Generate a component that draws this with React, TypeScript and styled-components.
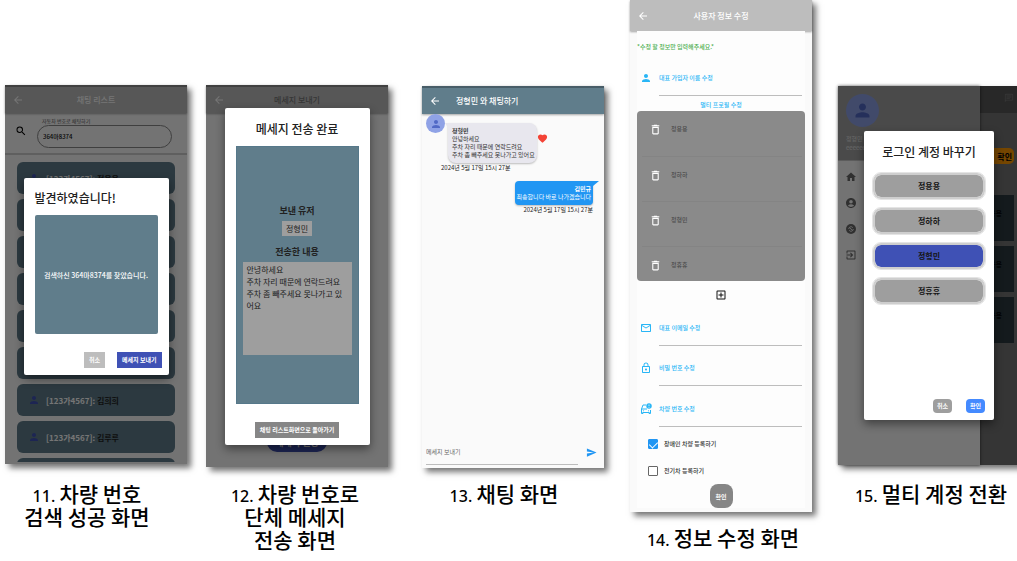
import React from "react";
import styled, { createGlobalStyle, css } from "styled-components";
import {
  MdAccountCircle,
  MdArrowBack,
  MdDeleteOutline,
  MdExitToApp,
  MdFavorite,
  MdHome,
  MdLockOutline,
  MdMailOutline,
  MdOutlineAddBox,
  MdOutlineChat,
  MdPerson,
  MdSearch,
  MdSend,
} from "react-icons/md";

const GlobalStyle = createGlobalStyle`
  * { box-sizing: border-box; }
  body {
    margin: 0;
    background: #fff;
    color: #212121;
    font-family: "Noto Sans CJK KR", "Noto Sans", sans-serif;
    overflow-x: hidden;
  }
  button, input, textarea { font-family: inherit; margin: 0; }
  h2, h3, p, figure, ul { margin: 0; padding: 0; }
  ul { list-style: none; }
  svg { display: block; flex: none; }
`;

/* ---------- page ---------- */

const Gallery = styled.main`
  display: grid;
  grid-template-columns:
    minmax(0, 192fr) minmax(0, 210fr) minmax(0, 222fr)
    minmax(0, 194fr) minmax(0, 199fr);
  align-items: start;
  padding-bottom: 8px;
  overflow: hidden;
`;

const Figure = styled.figure<{ $side: number; $bleed?: boolean }>`
  padding: 0 ${(p) => (p.$bleed ? 0 : p.$side)}px 0 ${(p) => p.$side}px;
  margin-right: ${(p) => (p.$bleed ? "-3px" : "0")};
`;

const Stage = styled.div<{ $top: number; $height: number }>`
  padding-top: ${(p) => p.$top}px;
  min-height: ${(p) => p.$height}px;
`;

const Phone = styled.section<{ $height: number; $bg?: string }>`
  position: relative;
  display: flex;
  flex-direction: column;
  height: ${(p) => p.$height}px;
  background: ${(p) => p.$bg || "#fafafa"};
  box-shadow: 4px 4px 6px rgba(0, 0, 0, 0.55);
`;

const Caption = styled.figcaption<{ $left?: number; $right?: number }>`
  padding: 0 ${(p) => p.$right || 0}px 0 ${(p) => p.$left || 0}px;
  margin-top: 14px;
  color: #000;
  font-size: 21px;
  font-weight: 500;
  line-height: 23px;
  text-align: center;
  white-space: nowrap;
`;

const CaptionNumber = styled.span`
  font-family: "Noto Sans", sans-serif;
  font-size: 16px;
  font-weight: 500;
  line-height: 1;
`;

/* ---------- shared phone parts ---------- */

const AppBar = styled.header<{ $bg?: string; $height?: number; $strip?: boolean }>`
  display: grid;
  grid-template-columns: 26px 1fr 26px;
  align-items: center;
  flex: none;
  height: ${(p) => p.$height || 28}px;
  border-top: ${(p) => (p.$strip ? "2px solid rgba(0,0,0,0.25)" : "none")};
  background: ${(p) => p.$bg || "#bdbdbd"};
  box-shadow: 0 1px 2px rgba(0, 0, 0, 0.35);
  color: #fff;
`;

const BarTitle = styled.h2<{ $color?: string; $left?: boolean }>`
  padding-left: ${(p) => (p.$left ? 8 : 0)}px;
  color: ${(p) => p.$color || "#fff"};
  font-size: 8px;
  font-weight: 500;
  line-height: 12px;
  text-align: ${(p) => (p.$left ? "left" : "center")};
`;

const IconButton = styled.button`
  display: flex;
  justify-content: center;
  align-items: center;
  padding: 0;
  border: 0;
  background: none;
  color: inherit;
`;

const Scrim = styled.div<{ $top?: number }>`
  position: absolute;
  inset: 0;
  z-index: 2;
  display: flex;
  align-items: center;
  justify-content: center;
  padding-top: ${(p) => p.$top || 0}px;
  background: rgba(0, 0, 0, 0.54);
`;

const Dialog = styled.div<{ $width: number; $height: number; $pad: string }>`
  display: flex;
  flex-direction: column;
  width: ${(p) => p.$width}px;
  min-height: ${(p) => p.$height}px;
  padding: ${(p) => p.$pad};
  border-radius: 2px;
  background: #fff;
  box-shadow: 0 4px 10px rgba(0, 0, 0, 0.45);
`;

const DialogTitle = styled.h2<{ $center?: boolean }>`
  font-size: 12px;
  font-weight: 500;
  line-height: 18px;
  text-align: ${(p) => (p.$center ? "center" : "left")};
  white-space: nowrap;
`;

const DialogActions = styled.div<{ $gap: number; $center?: boolean }>`
  display: flex;
  justify-content: ${(p) => (p.$center ? "center" : "flex-end")};
  gap: ${(p) => p.$gap}px;
  margin-top: auto;
`;

const SmallButton = styled.button<{ $bg: string; $pad?: number; $h?: number; $round?: number }>`
  height: ${(p) => p.$h || 16}px;
  padding: 0 ${(p) => p.$pad ?? 5}px;
  border: 0;
  border-radius: ${(p) => p.$round || 0}px;
  background: ${(p) => p.$bg};
  color: #fff;
  font-size: 6px;
  font-weight: 700;
  line-height: 8px;
  white-space: nowrap;
`;

/* ---------- 11: search result ---------- */

const SearchArea = styled.div`
  display: grid;
  grid-template-columns: 32px 1fr;
  align-items: center;
  flex: none;
  height: 42px;
  padding: 0 15px 4px 0;
  border-bottom: 2px solid #d0d0d0;
  color: #000;
`;

const SearchIcon = styled.span`
  display: flex;
  justify-content: center;
`;

const SearchBox = styled.div`
  position: relative;
  height: 23px;
`;

const SearchLabel = styled.label`
  position: absolute;
  top: -3px;
  left: 4px;
  padding: 0 1px;
  background: #fafafa;
  color: #555;
  font-size: 5px;
  line-height: 7px;
`;

const SearchInput = styled.input`
  width: 100%;
  height: 23px;
  padding: 0 5px;
  border: 1px solid #8a8a8a;
  border-radius: 12px;
  background: none;
  color: #111;
  font-size: 6px;
  font-weight: 500;
`;

const CarList = styled.ul`
  display: flex;
  flex: 1;
  flex-direction: column;
  gap: 5px;
  min-height: 0;
  margin: 7px 12px 2px;
  overflow: hidden;
`;

const CarCard = styled.li`
  display: flex;
  align-items: center;
  flex: none;
  gap: 6px;
  height: 32px;
  padding-left: 11px;
  border-radius: 6px;
  background: #607d8b;
  color: #222;
  font-size: 8px;
  font-weight: 700;
`;

const Plate = styled.span`
  color: #fff;
`;

const ResultPanel = styled.div`
  display: flex;
  align-items: center;
  justify-content: center;
  height: 119px;
  margin: 8px 4px 0 0;
  border-radius: 2px;
  background: #607d8b;
  color: #fff;
  font-size: 7px;
  font-weight: 500;
  white-space: nowrap;
`;

/* ---------- 12: message sent ---------- */

const SentPanel = styled.div`
  display: flex;
  flex-direction: column;
  align-items: center;
  height: 258px;
  margin-top: 8px;
  padding: 57px 6px 0;
  border: 1px solid #56788a;
  background: #607d8b;
`;

const SentHeading = styled.h3`
  font-size: 9px;
  font-weight: 700;
  line-height: 14px;
`;

const Recipient = styled.p`
  margin: 3px 0 9px;
  padding: 0 4px;
  background: #9e9e9e;
  font-size: 8px;
  line-height: 15px;
`;

const SentText = styled.p`
  align-self: stretch;
  height: 93px;
  margin-top: 3px;
  padding: 2px 4px;
  background: #9e9e9e;
  font-size: 8px;
  line-height: 12px;
`;

const SendPill = styled.button`
  align-self: center;
  width: 60px;
  height: 20px;
  margin: auto 0 15px;
  padding: 0;
  border: 0;
  border-radius: 10px;
  background: #3f51b5;
  color: #fff;
  font-size: 9px;
  font-weight: 700;
  white-space: nowrap;
`;

/* ---------- 13: chat ---------- */

const Messages = styled.div`
  display: flex;
  flex: 1;
  flex-direction: column;
  font-size: 6px;
  line-height: 8px;
`;

const Incoming = styled.div`
  display: flex;
  align-items: flex-start;
  padding-left: 4px;
`;

const Avatar = styled.span<{ $size: number }>`
  display: flex;
  align-items: center;
  justify-content: center;
  flex: none;
  width: ${(p) => p.$size}px;
  height: ${(p) => p.$size}px;
  border-radius: 50%;
  background: #8fa2e6;
  color: #5169c6;
`;

const Bubble = styled.div<{ $mine?: boolean }>`
  position: relative;
  background: ${(p) => (p.$mine ? "#2196f3" : "#e8e7ee")};
  box-shadow: 0 1px 2px rgba(0, 0, 0, 0.25);
  color: ${(p) => (p.$mine ? "#fff" : "#333")};
  white-space: nowrap;
  ${(p) =>
    p.$mine
      ? css`
          align-self: flex-end;
          margin: 9px 11px 0 0;
          padding: 4px 2px;
          border-radius: 4px 0 4px 4px;
          text-align: right;
        `
      : css`
          margin: 9px 0 0 3px;
          padding: 4px 2px 4px 4px;
          border-radius: 0 8px 8px 8px;
        `}
  &::before {
    content: "";
    position: absolute;
    top: 0;
    ${(p) => (p.$mine ? "right: -6px;" : "left: -3px;")}
    border-top: 5px solid ${(p) => (p.$mine ? "#2196f3" : "#e8e7ee")};
    ${(p) => (p.$mine ? "border-right: 6px solid transparent;" : "border-left: 3px solid transparent;")}
  }
`;

const Sender = styled.strong`
  display: block;
  font-weight: 700;
`;

const Like = styled.span`
  margin-top: 19px;
  color: #f44336;
`;

const Time = styled.time<{ $mine?: boolean }>`
  display: block;
  padding: ${(p) => (p.$mine ? "1px 11px 0 0" : "1px 0 0 19px")};
  text-align: ${(p) => (p.$mine ? "right" : "left")};
`;

const Composer = styled.form`
  display: grid;
  grid-template-columns: 1fr 24px;
  align-items: center;
  gap: 1px;
  padding: 0 1px 3px 4px;
`;

const ComposerInput = styled.input`
  min-width: 0;
  height: 26px;
  padding: 0;
  border: 0;
  border-bottom: 1px solid #bdbdbd;
  background: none;
  font-size: 6px;
  &::placeholder { color: #666; opacity: 1; }
`;

/* ---------- 14: edit profile ---------- */

const EditForm = styled.form`
  display: flex;
  flex-direction: column;
  margin: 0 7px;
  padding-top: 10px;
  background: #fdfdfd;
  color: #29b6f6;
  font-size: 6px;
  font-weight: 500;
`;

const Note = styled.p`
  color: #4caf50;
  line-height: 12px;
  white-space: nowrap;
`;

const Field = styled.div<{ $top: number }>`
  display: grid;
  grid-template-columns: 18px 1fr;
  column-gap: 4px;
  align-items: center;
  margin: ${(p) => p.$top}px 3px 0 0;
`;

const FieldIcon = styled.span`
  display: flex;
  justify-content: center;
`;

const FieldLabel = styled.label`
  line-height: 12px;
`;

const FieldInput = styled.input`
  grid-column: 2;
  min-width: 0;
  height: 12px;
  padding: 0;
  border: 0;
  border-bottom: 1px solid #bdbdbd;
  background: none;
  font-size: 6px;
`;

const ProfilesTitle = styled.h3`
  margin-top: 3px;
  font-size: 6px;
  font-weight: 500;
  line-height: 12px;
  text-align: center;
`;

const Profiles = styled.ul`
  border-radius: 4px;
  background: #8a8a8a;
  color: #4a4a4a;
  overflow: hidden;
`;

const Profile = styled.li`
  display: flex;
  align-items: flex-start;
  gap: 9px;
  height: 45px;
  margin: 0 3px 0 5px;
  padding: 12px 0 0 7px;
  line-height: 12px;
  & + & { border-top: 1px solid #848484; }
  &:last-child { height: 35px; }
  svg { color: #fff; }
`;

const AddButton = styled(IconButton)`
  align-self: center;
  margin-top: 8px;
  color: #111;
`;

const CheckRow = styled.label<{ $top: number }>`
  display: flex;
  align-items: center;
  gap: 6px;
  margin: ${(p) => p.$top}px 0 0 11px;
  color: #333;
  line-height: 10px;
`;

const CheckBox = styled.input`
  display: grid;
  place-items: center;
  width: 10px;
  height: 10px;
  border: 1px solid #666;
  border-radius: 1px;
  appearance: none;
  background: #fff;
  &:checked { border-color: #2196f3; background: #2196f3; }
  &:checked::after {
    content: "";
    width: 4px;
    height: 7px;
    margin-bottom: 2px;
    border: solid #fff;
    border-width: 0 1px 1px 0;
    transform: rotate(45deg);
  }
`;

const ConfirmButton = styled.button`
  align-self: center;
  width: 23px;
  height: 24px;
  margin-top: 8px;
  padding: 0;
  border: 0;
  border-radius: 8px;
  background: #868686;
  color: #fff;
  font-size: 6px;
  font-weight: 700;
`;

/* ---------- 15: account switch ---------- */

const HomeBar = styled.header`
  display: flex;
  justify-content: flex-end;
  height: 27px;
  padding: 7px 6px 0 0;
  background: #bdbdbd;
  color: #fff;
`;

const HomeBody = styled.div`
  display: flex;
  flex-direction: column;
  align-items: flex-end;
  gap: 5px;
  padding: 35px 6px 0 0;
`;

const OrangePill = styled.button`
  position: relative;
  z-index: 1;
  width: 46px;
  height: 16px;
  margin-bottom: 26px;
  padding: 0 2px;
  border: 0;
  border-radius: 5px;
  background: #ff9800;
  font-size: 8px;
  font-weight: 700;
  text-align: right;
`;

const HomeCard = styled.div`
  width: 80px;
  height: 46px;
  padding: 12px 12px 0 0;
  background: #607d8b;
  color: #111;
  font-size: 7px;
  font-weight: 700;
  line-height: 12px;
  text-align: right;
`;

const DrawerScrim = styled.div`
  position: absolute;
  inset: 0;
  background: rgba(0, 0, 0, 0.54);
`;

const Drawer = styled.aside`
  position: absolute;
  inset: 0 auto 0 0;
  z-index: 1;
  width: 142px;
  background: #fafafa;
  box-shadow: 0 0 3px rgba(0, 0, 0, 0.6);
`;

const DrawerHead = styled.div`
  height: 75px;
  padding: 8px;
  border-bottom: 1px solid #c8c8c8;
  background: #a2a2a2;
  color: #e0e0e0;
  font-size: 6px;
  line-height: 9px;
`;

const DrawerName = styled.p`
  padding-top: 7px;
`;

const DrawerNav = styled.nav`
  display: flex;
  flex-direction: column;
  gap: 14px;
  padding: 10px 7px;
`;

const NavLink = styled.a`
  color: #6a6a6a;
`;

const Accounts = styled.div`
  display: flex;
  flex-direction: column;
  gap: 9px;
  margin-top: 12px;
`;

const Account = styled.button<{ $active?: boolean }>`
  height: 26px;
  padding: 0;
  border: 2px solid #cecece;
  border-radius: 8px;
  outline: 1px solid #e4e4e4;
  background: ${(p) => (p.$active ? "#3f51b5" : "#9e9e9e")};
  background-clip: padding-box;
  color: #161616;
  font-size: 8px;
  font-weight: 700;
  line-height: 12px;
`;

const CarBadgeIcon = () => (
  <svg width="12" height="12" viewBox="0 0 24 24" fill="none" stroke="currentColor" strokeWidth="2">
    <path d="M12 4H6L3 12v9h3v-2h12v2h3v-7M3.500 12H14M5 19h14" />
    <circle cx="7" cy="15.500" r="1.200" fill="currentColor" stroke="none" />
    <circle cx="17" cy="15.500" r="1.200" fill="currentColor" stroke="none" />
    <circle cx="18" cy="6" r="5.500" fill="currentColor" stroke="none" />
    <path d="M18 3v3.500M18 8v1.500" stroke="#fdfdfd" strokeWidth="1.500" />
  </svg>
);

const SwitchIcon = () => (
  <svg width="12" height="12" viewBox="0 0 24 24" fill="none">
    <circle cx="12" cy="12" r="10" fill="currentColor" />
    <path
      d="M7.500 12a4.500 4.500 0 0 1 8-2.800M16.500 12a4.500 4.500 0 0 1-8 2.800M10 10.500l4 3"
      stroke="#fafafa"
      strokeWidth="1.800"
    />
  </svg>
);

const cars: [string, string][] = [
  ["[123가4567]:", "정용용"],
  ["[123가4567]:", "정하하"],
  ["[123가4567]:", "정형민"],
  ["[123가4567]:", "정휴휴"],
  ["[123가4567]:", "김민규"],
  ["[123가4567]:", "김하하"],
  ["[123가4567]:", "김희희"],
  ["[123가4567]:", "김루루"],
];

const accounts = ["정용용", "정하하", "정형민", "정휴휴"];

const Back = () => (
  <IconButton type="button" aria-label="뒤로">
    <MdArrowBack size={12} />
  </IconButton>
);

function SearchScreen() {
  return (
    <Phone $height={379}>
      <AppBar $strip>
        <Back />
        <BarTitle>채팅 리스트</BarTitle>
      </AppBar>
      <SearchArea>
        <SearchIcon>
          <MdSearch size={12} />
        </SearchIcon>
        <SearchBox>
          <SearchInput id="plate" defaultValue="364마8374" />
          <SearchLabel htmlFor="plate">자동차 번호로 채팅하기</SearchLabel>
        </SearchBox>
      </SearchArea>
      <CarList>
        {cars.map(([plate, name], i) => (
          <CarCard key={i}>
            <MdPerson size={12} color="#3f51b5" />
            <span>
              <Plate>{plate}</Plate> {name}
            </span>
          </CarCard>
        ))}
        <CarCard />
      </CarList>
      <Scrim $top={4}>
        <Dialog $width={145} $height={197} $pad="11px 7px 7px 11px" role="dialog">
          <DialogTitle>발견하였습니다!</DialogTitle>
          <ResultPanel>검색하신 364마8374를 찾았습니다.</ResultPanel>
          <DialogActions $gap={12}>
            <SmallButton type="button" $bg="#bdbdbd">취소</SmallButton>
            <SmallButton type="button" $bg="#3f51b5">메세지 보내기</SmallButton>
          </DialogActions>
        </Dialog>
      </Scrim>
    </Phone>
  );
}

function SentScreen() {
  return (
    <Phone $height={382}>
      <AppBar $strip>
        <Back />
        <BarTitle $color="#777">메세지 보내기</BarTitle>
      </AppBar>
      <SendPill type="button">메세지 전송</SendPill>
      <Scrim>
        <Dialog $width={145} $height={337} $pad="12px 11px 7px" role="dialog">
          <DialogTitle $center>메세지 전송 완료</DialogTitle>
          <SentPanel>
            <SentHeading>보낸 유저</SentHeading>
            <Recipient>정형민</Recipient>
            <SentHeading>전송한 내용</SentHeading>
            <SentText>
              안녕하세요
              <br />
              주차 자리 때문에 연락드려요
              <br />
              주차 좀 빼주세요 못나가고 있어요
            </SentText>
          </SentPanel>
          <DialogActions $gap={0} $center>
            <SmallButton type="button" $bg="#868686">채팅 리스트화면으로 돌아가기</SmallButton>
          </DialogActions>
        </Dialog>
      </Scrim>
    </Phone>
  );
}

function ChatScreen() {
  return (
    <Phone $height={382}>
      <AppBar $strip $bg="#607d8b">
        <Back />
        <BarTitle $left>정형민 와 채팅하기</BarTitle>
      </AppBar>
      <Messages>
        <Incoming>
          <Avatar $size={19}>
            <MdPerson size={12} />
          </Avatar>
          <Bubble>
            <Sender>정형민</Sender>
            안녕하세요
            <br />
            주차 자리 때문에 연락드려요
            <br />
            주차 좀 빼주세요 못나가고 있어요
          </Bubble>
          <Like>
            <MdFavorite size={11} />
          </Like>
        </Incoming>
        <Time>2024년 5월 17일 15시 27분</Time>
        <Bubble $mine>
          <Sender>김민규</Sender>
          죄송합니다 바로 나가겠습니다
        </Bubble>
        <Time $mine>2024년 5월 17일 15시 27분</Time>
      </Messages>
      <Composer>
        <ComposerInput aria-label="메세지 보내기" placeholder="메세지 보내기" />
        <IconButton type="button" aria-label="전송">
          <MdSend size={11} color="#2196f3" />
        </IconButton>
      </Composer>
    </Phone>
  );
}

function EditScreen() {
  return (
    <Phone $height={512}>
      <AppBar $height={31}>
        <Back />
        <BarTitle>사용자 정보 수정</BarTitle>
      </AppBar>
      <EditForm>
        <Note>*수정 할 정보만 입력해주세요.*</Note>
        <Field $top={19}>
          <FieldIcon>
            <MdPerson size={12} />
          </FieldIcon>
          <FieldLabel htmlFor="name">대표 가입자 이름 수정</FieldLabel>
          <FieldInput id="name" />
        </Field>
        <ProfilesTitle>멀티 프로필 수정</ProfilesTitle>
        <Profiles>
          {accounts.map((name) => (
            <Profile key={name}>
              <MdDeleteOutline size={13} />
              {name}
            </Profile>
          ))}
        </Profiles>
        <AddButton type="button" aria-label="추가">
          <MdOutlineAddBox size={12} />
        </AddButton>
        <Field $top={21}>
          <FieldIcon>
            <MdMailOutline size={12} />
          </FieldIcon>
          <FieldLabel htmlFor="email">대표 이메일 수정</FieldLabel>
          <FieldInput id="email" />
        </Field>
        <Field $top={16}>
          <FieldIcon>
            <MdLockOutline size={12} />
          </FieldIcon>
          <FieldLabel htmlFor="password">비밀 번호 수정</FieldLabel>
          <FieldInput id="password" type="password" />
        </Field>
        <Field $top={17}>
          <FieldIcon>
            <CarBadgeIcon />
          </FieldIcon>
          <FieldLabel htmlFor="car">차량 번호 수정</FieldLabel>
          <FieldInput id="car" />
        </Field>
        <CheckRow $top={12}>
          <CheckBox type="checkbox" defaultChecked />
          장애인 차량 등록하기
        </CheckRow>
        <CheckRow $top={17}>
          <CheckBox type="checkbox" />
          전기차 등록하기
        </CheckRow>
        <ConfirmButton type="button">확인</ConfirmButton>
      </EditForm>
    </Phone>
  );
}

function AccountScreen() {
  return (
    <Phone $height={379}>
      <HomeBar>
        <MdOutlineChat size={10} />
      </HomeBar>
      <HomeBody>
        <OrangePill type="button">확인</OrangePill>
        <HomeCard>정용용</HomeCard>
        <HomeCard>정용용</HomeCard>
        <HomeCard>정용용</HomeCard>
      </HomeBody>
      <DrawerScrim />
      <Drawer>
        <DrawerHead>
          <Avatar $size={33}>
            <MdPerson size={21} />
          </Avatar>
          <DrawerName>정형민</DrawerName>
          <p>eeeeeeee</p>
        </DrawerHead>
        <DrawerNav>
          <NavLink href="#home" aria-label="홈"><MdHome size={12} /></NavLink>
          <NavLink href="#account" aria-label="계정"><MdAccountCircle size={12} /></NavLink>
          <NavLink href="#switch" aria-label="계정 전환"><SwitchIcon /></NavLink>
          <NavLink href="#logout" aria-label="로그아웃"><MdExitToApp size={12} /></NavLink>
        </DrawerNav>
      </Drawer>
      <Scrim>
        <Dialog $width={130} $height={289} $pad="12px 9px 7px" role="dialog">
          <DialogTitle $center>로그인 계정 바꾸기</DialogTitle>
          <Accounts>
            {accounts.map((name) => (
              <Account key={name} type="button" $active={name === "정형민"}>
                {name}
              </Account>
            ))}
          </Accounts>
          <DialogActions $gap={14}>
            <SmallButton type="button" $bg="#9e9e9e" $pad={4} $h={14} $round={4}>취소</SmallButton>
            <SmallButton type="button" $bg="#448aff" $pad={4} $h={14} $round={4}>확인</SmallButton>
          </DialogActions>
        </Dialog>
      </Scrim>
    </Phone>
  );
}

export default function App() {
  return (
    <>
      <GlobalStyle />
      <Gallery>
        <Figure $side={5}>
          <Stage $top={85} $height={468}>
            <SearchScreen />
          </Stage>
          <Caption $right={18}>
            <CaptionNumber>11. </CaptionNumber>차량 번호
            <br />
            검색 성공 화면
          </Caption>
        </Figure>
        <Figure $side={14}>
          <Stage $top={85} $height={468}>
            <SentScreen />
          </Stage>
          <Caption $right={4}>
            <CaptionNumber>12. </CaptionNumber>차량 번호로
            <br />
            단체 메세지
            <br />
            전송 화면
          </Caption>
        </Figure>
        <Figure $side={20}>
          <Stage $top={86} $height={468}>
            <ChatScreen />
          </Stage>
          <Caption $right={18}>
            <CaptionNumber>13. </CaptionNumber>채팅 화면
          </Caption>
        </Figure>
        <Figure $side={6}>
          <Stage $top={0} $height={512}>
            <EditScreen />
          </Stage>
          <Caption $left={4}>
            <CaptionNumber>14. </CaptionNumber>정보 수정 화면
          </Caption>
        </Figure>
        <Figure $side={20} $bleed>
          <Stage $top={86} $height={468}>
            <AccountScreen />
          </Stage>
          <Caption $left={4}>
            <CaptionNumber>15. </CaptionNumber>멀티 계정 전환
          </Caption>
        </Figure>
      </Gallery>
    </>
  );
}
